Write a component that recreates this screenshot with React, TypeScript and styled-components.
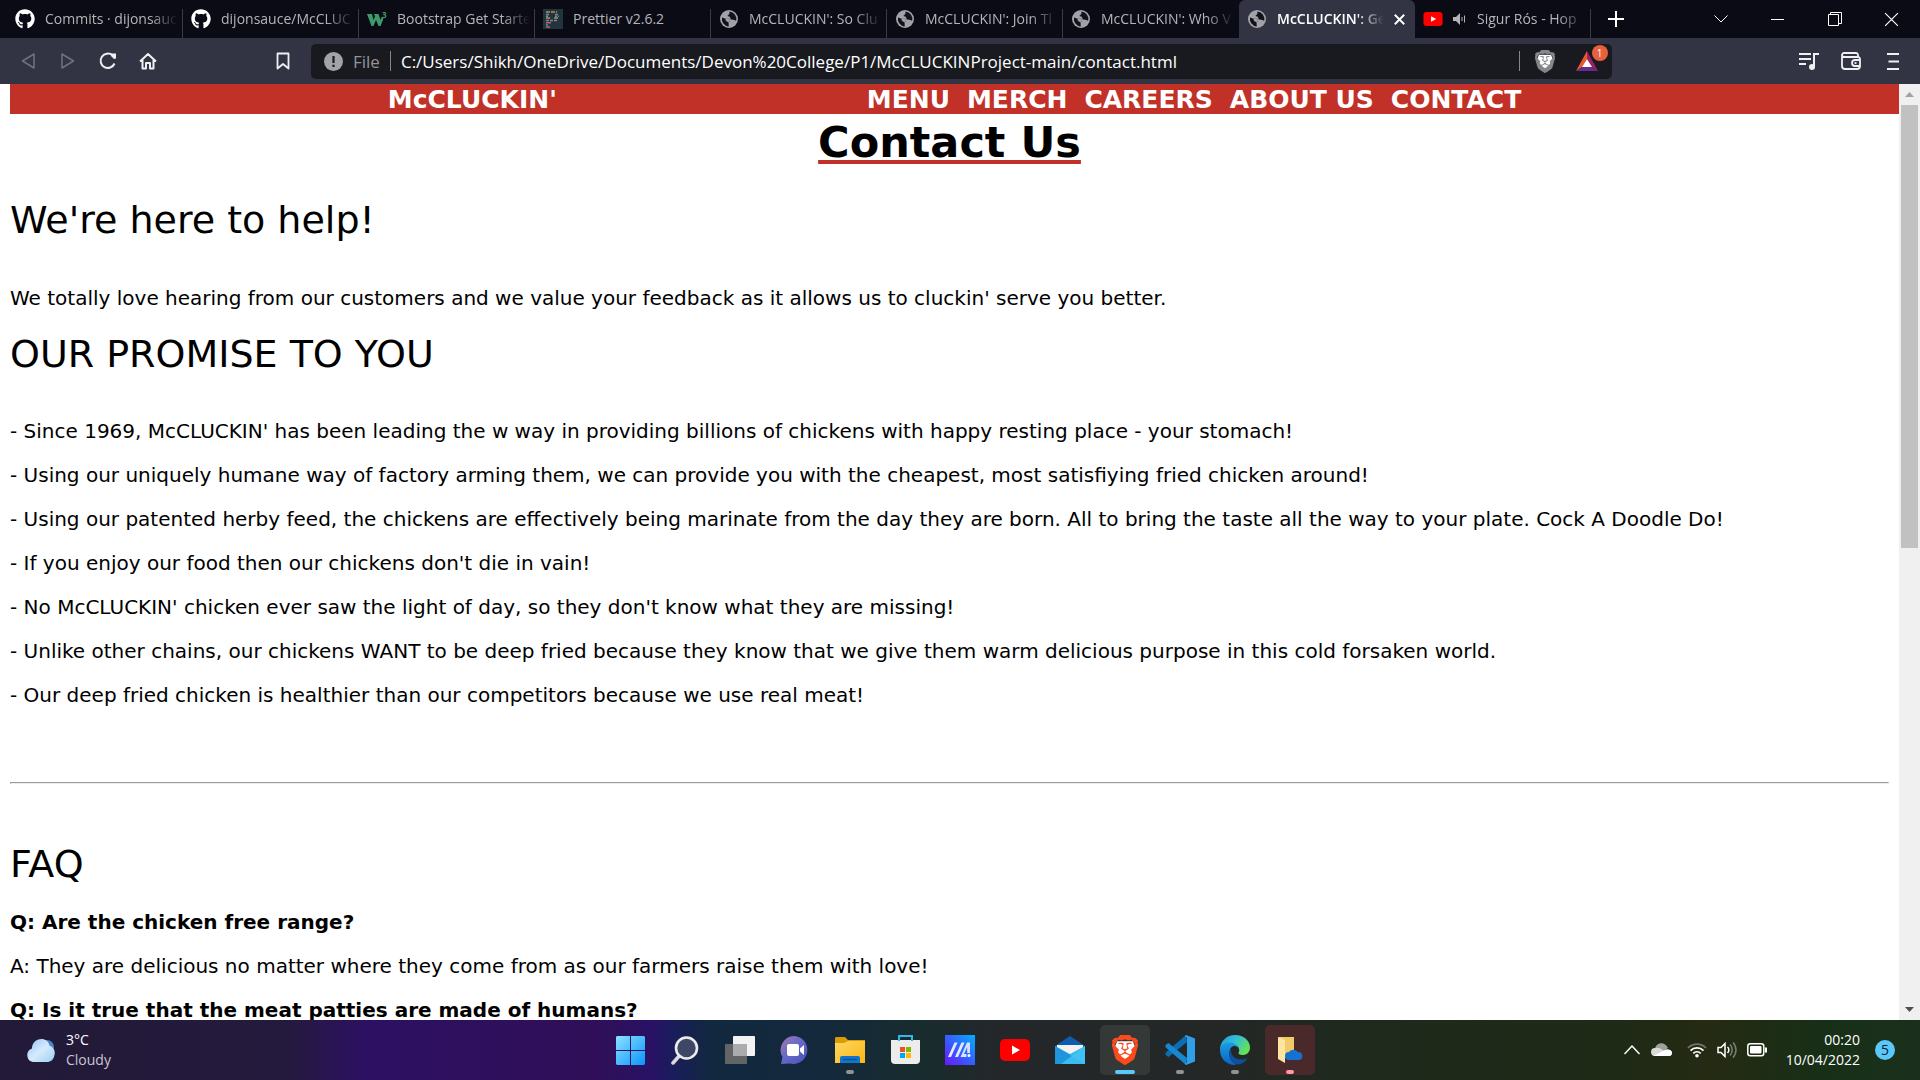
import React from 'react';
import styled, { createGlobalStyle, css } from 'styled-components';
import { FaGithub } from 'react-icons/fa';
import { SiBrave } from 'react-icons/si';

const ui = '"Open Sans", "Noto Sans", sans-serif';
const web = 'Verdana, "DejaVu Sans", sans-serif';
const red = '#c13128';

const Global = createGlobalStyle`
  * { box-sizing: border-box; }
  body { margin: 0; background: #fff; }
  button { border: 0; padding: 0; background: none; color: inherit; font: inherit; }
  svg { display: block; flex: none; }
`;

const Screen = styled.div`
  height: 100vh;
  display: flex;
  flex-direction: column;
  overflow: hidden;
  font-family: ${ui};
`;

/* ---------- tab strip ---------- */
const TabStrip = styled.div`
  flex: none;
  display: flex;
  height: 38px;
  padding-left: 7px;
  background: #0b0b15;
  color: #b5b5b9;
`;
const Tab = styled.div<{ $active?: boolean; $line?: boolean }>`
  flex: 0 1 176px;
  min-width: 0;
  display: flex;
  align-items: center;
  gap: 10px;
  padding: 0 5px 0 8px;
  font-size: 14px;
  line-height: 18px;
  background: linear-gradient(#3b3b40, #3b3b40) right bottom / 1px 29px no-repeat;
  ${p => !p.$line && css`background: none;`}
  ${p => p.$active && css`
    padding-right: 10px;
    background: #323443;
    color: #fff;
    font-weight: 600;
    border-radius: 6px 6px 0 0;
  `}
`;
const TabTitle = styled.span<{ $fade: boolean }>`
  flex: 1;
  min-width: 0;
  overflow: hidden;
  white-space: nowrap;
  ${p => p.$fade && css`mask-image: linear-gradient(to right, #000 calc(100% - 28px), transparent);`}
`;
const StripButton = styled.button<{ $w: number }>`
  width: ${p => p.$w}px;
  height: 38px;
  display: grid;
  place-items: center;
  color: #fff;
`;
const TabClose = styled.button`
  color: #fff;
`;
const Spacer = styled.div<{ $grow: number }>`
  flex: ${p => p.$grow} 1 0;
`;

/* ---------- toolbar ---------- */
const Toolbar = styled.div`
  flex: none;
  display: flex;
  align-items: center;
  height: 46px;
  padding: 0 7px 0 8px;
  background: #323443;
  color: #e6e6ea;
`;
const ToolButton = styled.button<{ $dim?: boolean }>`
  width: 40px;
  height: 40px;
  display: grid;
  place-items: center;
  color: ${p => (p.$dim ? '#70717c' : '#f0f0f2')};
`;
const EndTools = styled.div`
  display: flex;
  gap: 2px;
`;
const AddressBar = styled.div`
  flex: 202 1 0;
  height: 35px;
  margin: 0 0 0 8px;
  padding: 0 8px 0 13px;
  display: flex;
  align-items: center;
  gap: 10px;
  border-radius: 5px;
  background: #191a1f;
  font-size: 17px;
`;
const Scheme = styled.label`
  color: #93949a;
`;
const Rule = styled.span`
  width: 1px;
  height: 20px;
  background: #85868c;
`;
const Address = styled.input`
  flex: 1;
  min-width: 0;
  border: 0;
  padding: 0;
  outline: 0;
  background: none;
  color: #fff;
  font: 17px ${ui};
`;
const Shields = styled.button`
  width: 30px;
  display: grid;
  place-items: center;
`;
const Rewards = styled.button`
  position: relative;
  width: 34px;
  height: 32px;
  display: grid;
  place-items: center;
`;
const Badge = styled.span`
  position: absolute;
  top: 0;
  right: -4px;
  width: 16px;
  height: 16px;
  border-radius: 8px;
  background: #e8603c;
  color: #fff;
  font-size: 10px;
  line-height: 16px;
  text-align: center;
`;

/* ---------- page ---------- */
const Viewport = styled.div`
  flex: 1;
  min-height: 0;
  display: flex;
  background: #fff;
`;
const Page = styled.div`
  flex: 1;
  min-width: 0;
  overflow: hidden;
  padding-left: 10px;
  font-family: ${web};
  font-size: 20px;
  line-height: 24px;
  color: #000;
`;
const Header = styled.header`
  display: flex;
  justify-content: space-between;
  padding: 2px 20% 0;
  background: ${red};
  font-size: 25px;
  line-height: 28px;
  font-weight: 700;
  white-space: nowrap;
`;
const SiteLink = styled.a`
  color: #fff;
  text-decoration: none;
`;
const SiteNav = styled.nav`
  display: flex;
  gap: 17px;
`;
const Content = styled.main`
  margin-right: 10px;
`;
const Title = styled.h1`
  margin: 0;
  text-align: center;
  font-size: 43px;
  line-height: 56px;
  text-decoration: underline ${red} 4px;
  text-underline-offset: 3px;
  text-decoration-skip-ink: none;
`;
const Heading = styled.h2<{ $top: number; $bottom: number }>`
  margin: ${p => p.$top}px 0 ${p => p.$bottom}px;
  font-size: 38px;
  line-height: 48px;
  font-weight: 400;
`;
const Para = styled.p`
  margin: 0 0 20px;
  white-space: nowrap;
`;
const Question = styled(Para)`
  font-weight: 700;
`;
const Divider = styled.hr`
  margin: 75px 0 0;
  border: 1px solid;
  border-color: #9a9a9a #ececec #ececec #9a9a9a;
`;

const Scrollbar = styled.div`
  flex: none;
  width: 21px;
  display: flex;
  flex-direction: column;
  background: #f0f0f0;
`;
const ScrollArrow = styled.button<{ $color: string }>`
  height: 21px;
  display: grid;
  place-items: center;
  color: ${p => p.$color};
`;
const ScrollTrack = styled.div`
  flex: 1;
  padding: 0 2px;
`;
const ScrollThumb = styled.div`
  height: 49.5%;
  background: #c1c1c1;
`;

/* ---------- taskbar ---------- */
const Taskbar = styled.footer`
  flex: none;
  display: grid;
  grid-template-columns: 1fr auto 1fr;
  align-items: center;
  height: 60px;
  background: linear-gradient(90deg, #221a38 0%, #241a3d 15%, #2d1063 19%, #300f58 31%, #281265 34%, #1a1c5c 35%, #12283f 37%, #14293c 43%, #182c2e 48%, #24272a 52%, #242726 64%, #1f291d 70%, #1e2a16 84%, #252a13 89%, #182f17 95%, #1a301c 100%);
  color: #fff;
  font-size: 14px;
  line-height: 20px;
`;
const Weather = styled.button`
  justify-self: start;
  display: flex;
  align-items: center;
  gap: 10px;
  padding-left: 26px;
  text-align: left;
`;
const Lines = styled.span`
  display: flex;
  flex-direction: column;
`;
const Muted = styled.span`
  color: #c9c5d2;
`;
const Apps = styled.div`
  display: flex;
  gap: 5px;
`;
const AppButton = styled.button<{ $bg?: string }>`
  position: relative;
  width: 50px;
  height: 50px;
  display: grid;
  place-items: center;
  border-radius: 5px;
  background: ${p => p.$bg || 'none'};
`;
const Running = styled.span<{ $w: number; $color: string }>`
  position: absolute;
  bottom: 1px;
  left: calc(50% - ${p => p.$w / 2}px);
  width: ${p => p.$w}px;
  height: 4px;
  border-radius: 2px;
  background: ${p => p.$color};
`;
const Tray = styled.div`
  justify-self: end;
  display: flex;
  align-items: center;
  padding-right: 25px;
`;
const TrayGroup = styled.div`
  display: flex;
  margin-right: 5px;
`;
const TrayButton = styled.button`
  width: 30px;
  height: 40px;
  display: grid;
  place-items: center;
`;
const Clock = styled.button`
  display: flex;
  flex-direction: column;
  align-items: flex-end;
  margin: 0 15px 0 14px;
`;
const Count = styled.button`
  width: 20px;
  height: 20px;
  border-radius: 10px;
  background: #5ac8fb;
  color: #10202c;
  font-size: 14px;
  line-height: 20px;
`;

/* ---------- drawings ---------- */
const Globe = () => (
  <svg width="20" height="20" viewBox="0 0 20 20">
    <circle cx="10" cy="10" r="9" fill="#a1a3a9" />
    <g fill="#12121c">
      <path d="M3 8.500l3.500 1.200h3.700l.8 2.300-1.500 1.200.300 4.300a7.600 7.600 0 0 1-6.800-9z" />
      <path d="M10.500 2.500a7.500 7.500 0 0 1 6.600 9.500l-1.600-1-3.700-.600-1-2.600-2.500-.800 2-2z" />
    </g>
    <path d="M6.500 9.700h3.700l.8 2.300-1.500 1.200L7 12zM12.500 10.800l3 .4-1.500 3-2 .8-.800-2z" fill="#a1a3a9" />
  </svg>
);
const W3 = () => (
  <svg width="20" height="20" viewBox="0 0 20 20" fill="#3f9a6b">
    <path d="M0 5h5l1.500 6L8 7.500 7 5h4.500l2 6 1-3 2 1.500L13.500 17h-2L9 11l-2.500 6h-2z" />
    <text x="15" y="9" fontSize="8" fontWeight="700" fontFamily="Open Sans">3</text>
  </svg>
);
const PrettierIcon = () => (
  <svg width="20" height="20" viewBox="0 0 20 20" strokeWidth="1.600" fill="none">
    <path fill="#22353f" d="M0 0h20v20H0z" />
    <path stroke="#b98a58" strokeDasharray="4 1" d="M3 3h11M3 9h4M11 9h4" />
    <path stroke="#8a7f98" strokeDasharray="3 1" d="M3 5.500h3M12 5.500h4M3 11.500h11" />
    <path stroke="#4f9aa4" strokeDasharray="2 1" d="M3 7.300h3M12 7.300h4M3 16h3" />
    <path stroke="#b8606a" d="M3 13.700h5M3 18h4" />
  </svg>
);
const YouTube = ({ w, h }: { w: number; h: number }) => (
  <svg width={w} height={h} viewBox="0 0 30 22">
    <rect width="30" height="22" rx="5" fill="#f00" />
    <path d="M12 6.500v9l8-4.500z" fill="#fff" />
  </svg>
);
const Speaker = () => (
  <svg width="14" height="12" viewBox="0 0 14 12" fill="#b5b5b9" stroke="#b5b5b9">
    <path stroke="none" d="M0 4h3l4-4v12L3 8H0z" />
    <path fill="none" d="M9 4v4M11.500 2.500v7" />
  </svg>
);
const Cross = ({ s, w }: { s: number; w: number }) => (
  <svg width={s} height={s} viewBox="0 0 14 14" stroke="currentColor" strokeWidth={w}>
    <path d="M1 1l12 12M13 1L1 13" />
  </svg>
);
const Stroke = ({ w, h, d, sw = 2 }: { w: number; h: number; d: string; sw?: number }) => (
  <svg width={w} height={h} viewBox={`0 0 ${w} ${h}`} fill="none" stroke="currentColor" strokeWidth={sw} strokeLinejoin="round">
    <path d={d} />
  </svg>
);
const Reload = () => (
  <svg width="18" height="18" viewBox="0 0 18 18" fill="none" stroke="currentColor" strokeWidth="2">
    <path d="M15.500 11.500A7.200 7.200 0 1 1 13.500 3.300" />
    <path d="M12 1.500h5v5l-2 .500-3-3z" fill="currentColor" stroke="none" />
  </svg>
);
const Info = () => (
  <svg width="19" height="19" viewBox="0 0 19 19">
    <circle cx="9.500" cy="9.500" r="9.500" fill="#a1a3a9" />
    <path d="M9.500 4v7M9.500 12.800v2.200" stroke="#191a1f" strokeWidth="2.200" />
  </svg>
);
const ShieldLion = ({ w, h, color }: { w: number; h: number; color: string }) => (
  <svg width={w} height={h} viewBox="2 0 20 24" preserveAspectRatio="none">
    <path fill="#fff" d="M6 5h12l2 5-3 8-5 3-5-3-3-8z" />
    <SiBrave size={24} color={color} />
  </svg>
);
const Bat = () => (
  <svg width="22" height="20" viewBox="0 0 22 20">
    <path d="M11 0L0 20l6-4 5-8z" fill="#f0562b" />
    <path d="M11 0l11 20-6-4-5-8z" fill="#9e1f63" />
    <path d="M0 20h22l-6-4H6z" fill="#662d91" />
    <path d="M11 8l-5 8h10z" fill="#fff" />
  </svg>
);
const Playlist = () => (
  <svg width="20" height="19" viewBox="0 0 20 19" fill="none" stroke="currentColor" strokeWidth="2">
    <path d="M0 2h12M0 7h12M0 12h7M15 15V2h5" />
    <ellipse cx="13" cy="15" rx="3" ry="3" fill="currentColor" stroke="none" />
  </svg>
);
const Wallet = () => (
  <svg width="20" height="18" viewBox="0 0 20 18" fill="none" stroke="currentColor" strokeWidth="1.800">
    <path d="M17 4V3a2 2 0 0 0-2-2H3a2 2 0 0 0-2 2v11a3 3 0 0 0 3 3h12a3 3 0 0 0 3-3V7a2 2 0 0 0-2-2H3a2 2 0 0 1-2-2" />
    <path d="M19 8h-5a3 3 0 0 0 0 6h5" />
    <path d="M13.500 11h2" />
  </svg>
);
const Cloud = () => (
  <svg width="30" height="23" viewBox="0 0 30 23">
    <defs>
      <linearGradient id="cl" x1="0" y1="0" x2="1" y2="1">
        <stop offset="0" stopColor="#8fc2f4" /><stop offset=".5" stopColor="#d5eafd" /><stop offset="1" stopColor="#9fcdf3" />
      </linearGradient>
    </defs>
    <circle cx="21" cy="8" r="7" fill="#4c86c6" />
    <path d="M7 23a7 7 0 0 1-1-13.500C6 4 10 0 15.500 0c4 0 7 2.500 8 6.500a8 8 0 0 1 5 9.500c-1 5-4 7-7.500 7z" fill="url(#cl)" />
  </svg>
);
const Windows = () => (
  <svg width="29" height="29" viewBox="0 0 29 29">
    <defs>
      <linearGradient id="wn" x1="0" y1="0" x2="1" y2="1">
        <stop offset="0" stopColor="#8be2ff" /><stop offset="1" stopColor="#0a94fb" />
      </linearGradient>
    </defs>
    <path fill="url(#wn)" d="M1 0h13v14H0V1zM15 0h13l1 1v13H15zM0 15h14v14H1l-1-1zM15 15h14v13l-1 1H15z" />
  </svg>
);
const Search = () => (
  <svg width="28" height="29" viewBox="0 0 28 29">
    <path d="M9 19l-7 8" stroke="#d9d9dc" strokeWidth="3.500" strokeLinecap="round" />
    <circle cx="15.500" cy="12" r="10.500" fill="#3f4766" stroke="#ececee" strokeWidth="2.600" />
  </svg>
);
const TaskView = () => (
  <svg width="30" height="28" viewBox="0 0 30 28">
    <rect y="8" width="22" height="20" rx="1" fill="#626466" />
    <rect x="8" width="22" height="20" rx="1" fill="#f2f2f2" />
    <path d="M8 8h14v12H8z" fill="#aaabac" />
  </svg>
);
const Chat = () => (
  <svg width="30" height="29" viewBox="0 0 30 29">
    <defs>
      <linearGradient id="ch" x1="0" y1="0" x2="1" y2="1">
        <stop offset="0" stopColor="#a27ab0" /><stop offset=".5" stopColor="#6367c8" /><stop offset="1" stopColor="#4b50b8" />
      </linearGradient>
    </defs>
    <path d="M15 0a14 14 0 1 1-5 27.500L1 28l1.500-7A14 14 0 0 1 15 0z" fill="url(#ch)" />
    <rect x="7" y="8" width="12" height="12" rx="2" fill="#fff" />
    <path d="M20 12.500l4-3.500v10l-4-3.500z" fill="#fff" />
  </svg>
);
const Explorer = () => (
  <svg width="30" height="27" viewBox="0 0 30 27">
    <defs>
      <linearGradient id="ex" x1="0" y1="0" x2="1" y2="1">
        <stop offset="0" stopColor="#ffd766" /><stop offset="1" stopColor="#f9b80f" />
      </linearGradient>
    </defs>
    <path d="M1 0h9l3 3h17v10H0V1z" fill="#dc9a05" />
    <path d="M0 6h9l4-2h17v22H0z" fill="url(#ex)" />
    <path d="M5 26v-5q0-2 2-2h16q2 0 2 2v5z" fill="#0f76c9" />
    <path d="M8 22.500h14" stroke="#084f93" strokeWidth="1.300" />
  </svg>
);
const Store = () => (
  <svg width="29" height="30" viewBox="0 0 29 30">
    <path d="M0 5h29v20a4 4 0 0 1-4 4H4a4 4 0 0 1-4-4z" fill="#ececec" />
    <path d="M8 6V1h13v5" fill="none" stroke="#2fb9e8" strokeWidth="2" />
    <path d="M9 12h5v5H9z" fill="#f25022" /><path d="M15 12h5v5h-5z" fill="#7fba00" />
    <path d="M9 18h5v5H9z" fill="#00a4ef" /><path d="M15 18h5v5h-5z" fill="#ffb900" />
  </svg>
);
const MyAsus = () => (
  <svg width="30" height="30" viewBox="0 0 30 30">
    <defs>
      <linearGradient id="ma" x1="0" y1="1" x2="1" y2="0">
        <stop offset="0" stopColor="#6a15ff" /><stop offset=".5" stopColor="#3560ff" /><stop offset="1" stopColor="#00b0ff" />
      </linearGradient>
    </defs>
    <path fill="url(#ma)" d="M0 0h30v30H0z" />
    <path d="M3 22L9.500 7.500h3L6 22zM10 22l6.500-14.500h3L13 22z" fill="#e3ecff" />
    <path d="M15.500 22L22 7.500h3V18h-2.800v-6l-3.200 7h2.500v3z" fill="#d5e2ff" />
    <circle cx="24" cy="20.500" r="1.500" fill="#fff" />
  </svg>
);
const Mail = () => (
  <svg width="30" height="28" viewBox="0 0 30 28">
    <path d="M0 10L15 0l15 10v4H0z" fill="#0e5cae" />
    <path d="M2 9h26v8L15 19 2 17z" fill="#f2f2f2" />
    <path d="M0 10l15 8 15-8v18H0z" fill="#36b9ee" />
    <path d="M0 10l30 18H0z" fill="#1f95de" />
    <path d="M30 10L6 28h24z" fill="#42c6f3" opacity=".8" />
  </svg>
);
const VsCode = () => (
  <svg width="30" height="30" viewBox="0 0 30 30">
    <path d="M22 7L3.500 22 0.500 20v-2.200L21 0z" fill="#0a6db5" />
    <path d="M22 23L3.500 8 0.500 10v2.200L21 30z" fill="#1787d1" />
    <path d="M21 0l9 3.500v23L21 30l-1-1 2-2V3l-2-2z" fill="#2f9fe8" />
  </svg>
);
const Edge = () => (
  <svg width="30" height="30" viewBox="0 0 30 30">
    <defs>
      <linearGradient id="e1" x1="0" y1="0" x2="1" y2=".5">
        <stop offset="0" stopColor="#1b9de0" /><stop offset=".55" stopColor="#35c1d1" /><stop offset="1" stopColor="#66e05a" />
      </linearGradient>
      <linearGradient id="e2" x1="0" y1="0" x2="0" y2="1">
        <stop offset="0" stopColor="#1c9ce6" /><stop offset="1" stopColor="#0a64bd" />
      </linearGradient>
    </defs>
    <path d="M0 15C0 6 7 0 15 0c9 0 15 6 15 12.500 0 5-3.500 7.500-7.500 7.500-3 0-4.500-1.200-4-2.200 2-3.300 0-7.800-4.500-7.800C6 10 0 15 0 15z" fill="url(#e1)" />
    <path d="M0 15C0 9.500 5 7.500 9.500 7.500c5 0 9 3 9.500 7-1-3-3.500-4-5.500-3.500C8 13 7 23 16 29.900 7 30.500 0 24 0 15z" fill="url(#e2)" />
    <path d="M11 14c-4 6-1 15 7.500 15.500 4-.800 7-3 9-6.500-8 4-17.500 0-16.500-9z" fill="#0f4fa0" />
  </svg>
);
const FolderCloud = () => (
  <svg width="26" height="28" viewBox="0 0 26 28">
    <path d="M2 1h15v21H5z" fill="#f0cb67" />
    <path d="M1 1l7 3v23l-7-4z" fill="#ffe6a0" />
    <path d="M12 24a4 4 0 0 1 0-8c2-3 7-3 8.500 0a4 4 0 0 1 1.500 8z" fill="#1672cf" />
  </svg>
);
const OneDrive = () => (
  <svg width="21" height="14" viewBox="0 0 21 14">
    <path d="M4 6c1-7 10-8 13-1l-8 5z" fill="#9da39a" />
    <path d="M4 13a4 4 0 0 1 0-8c3-1 7 1 9 3 4-3 8-1 8 2 0 2-1.500 3-3 3z" fill="#d8dad6" />
    <path d="M2 13l10-5c4-3 9-1 9 2 0 2-1.500 3-3 3z" fill="#fff" />
  </svg>
);
const Wifi = () => (
  <svg width="20" height="16" viewBox="0 0 20 16" fill="none" stroke="#fff" strokeWidth="1.800">
    <path d="M1 6a12.500 12.500 0 0 1 18 0" opacity=".35" />
    <path d="M3.500 8.700a9 9 0 0 1 13 0M6.300 11.400a5.300 5.300 0 0 1 7.400 0" />
    <circle cx="10" cy="13.800" r="1.800" fill="#fff" stroke="none" />
  </svg>
);
const Volume = () => (
  <svg width="20" height="16" viewBox="0 0 20 16" fill="none" stroke="#fff" strokeWidth="1.500">
    <path d="M1 5.500h3l4-4v13l-4-4H1z" />
    <path d="M10.500 5a4 4 0 0 1 0 6" />
    <path d="M13 2.500a8 8 0 0 1 0 11M16 .500a11 11 0 0 1 0 15" opacity=".4" />
  </svg>
);
const Battery = () => (
  <svg width="20" height="14" viewBox="0 0 20 14">
    <rect x=".8" y=".8" width="16" height="12" rx="2.500" fill="none" stroke="#fff" strokeWidth="1.500" />
    <rect x="3" y="3" width="11.500" height="7.500" rx="1" fill="#fff" />
    <path d="M18 4.500h2v5h-2z" fill="#fff" />
  </svg>
);

const globe = <Globe />;
const github = <FaGithub size={20} color="#fff" />;

const tabs: { title: string; icon: React.ReactNode; active?: boolean; line?: boolean; sound?: boolean; short?: boolean }[] = [
  { title: 'Commits · dijonsauc', icon: github, line: true },
  { title: 'dijonsauce/McCLUC', icon: github, line: true },
  { title: 'Bootstrap Get Starte', icon: <W3 />, line: true },
  { title: 'Prettier v2.6.2', icon: <PrettierIcon />, line: true, short: true },
  { title: "McCLUCKIN': So Clu", icon: globe, line: true },
  { title: "McCLUCKIN': Join Tl", icon: globe, line: true },
  { title: "McCLUCKIN': Who V", icon: globe },
  { title: "McCLUCKIN': Ge", icon: globe, active: true },
  { title: 'Sigur Rós - Hop', icon: <YouTube w={20} h={14} />, line: true, sound: true },
];

const promises = [
  "- Since 1969, McCLUCKIN' has been leading the w way in providing billions of chickens with happy resting place - your stomach!",
  '- Using our uniquely humane way of factory arming them, we can provide you with the cheapest, most satisfiying fried chicken around!',
  '- Using our patented herby feed, the chickens are effectively being marinate from the day they are born. All to bring the taste all the way to your plate. Cock A Doodle Do!',
  "- If you enjoy our food then our chickens don't die in vain!",
  "- No McCLUCKIN' chicken ever saw the light of day, so they don't know what they are missing!",
  '- Unlike other chains, our chickens WANT to be deep fried because they know that we give them warm delicious purpose in this cold forsaken world.',
  '- Our deep fried chicken is healthier than our competitors because we use real meat!',
];

const grey = '#8f9492';
const apps: { name: string; icon: React.ReactNode; bg?: string; bar?: [number, string] }[] = [
  { name: 'Start', icon: <Windows /> },
  { name: 'Search', icon: <Search /> },
  { name: 'Task view', icon: <TaskView /> },
  { name: 'Chat', icon: <Chat /> },
  { name: 'File Explorer', icon: <Explorer />, bar: [8, grey] },
  { name: 'Store', icon: <Store /> },
  { name: 'MyASUS', icon: <MyAsus /> },
  { name: 'YouTube', icon: <YouTube w={30} h={22} /> },
  { name: 'Mail', icon: <Mail /> },
  { name: 'Brave', icon: <ShieldLion w={26} h={30} color="#fb4a1c" />, bg: '#343836', bar: [20, '#5ac8fb'] },
  { name: 'Visual Studio Code', icon: <VsCode />, bar: [8, grey] },
  { name: 'Edge', icon: <Edge />, bar: [8, grey] },
  { name: 'Documents', icon: <FolderCloud />, bg: '#4a292b', bar: [8, '#ff99a4'] },
];

export default function App() {
  return (
    <Screen>
      <Global />
      <TabStrip>
        {tabs.map(t => (
          <Tab key={t.title} $active={t.active} $line={t.line}>
            {t.icon}
            {t.sound && <Speaker />}
            <TabTitle $fade={!t.short}>{t.title}</TabTitle>
            {t.active && <TabClose aria-label="Close tab"><Cross s={11} w={2.4} /></TabClose>}
          </Tab>
        ))}
        <StripButton $w={50} aria-label="New tab"><Stroke w={16} h={16} d="M8 0v16M0 8h16" /></StripButton>
        <Spacer $grow={1} />
        <StripButton $w={57} aria-label="Search tabs"><Stroke w={14} h={8} sw={1} d="M0.500 0.500l6.500 6.500 6.500-6.500" /></StripButton>
        <StripButton $w={57} aria-label="Minimise"><Stroke w={13} h={3} sw={1} d="M0 1.500h13" /></StripButton>
        <StripButton $w={57} aria-label="Restore"><Stroke w={14} h={14} sw={1} d="M0.500 2.500h10v11h-10zM2.500 2.500v-2h11v11h-3" /></StripButton>
        <StripButton $w={57} aria-label="Close"><Cross s={15} w={1.1} /></StripButton>
      </TabStrip>

      <Toolbar>
        <ToolButton $dim aria-label="Back"><Stroke w={14} h={18} sw={1.5} d="M13 2v14L1.500 9z" /></ToolButton>
        <ToolButton $dim aria-label="Forward"><Stroke w={14} h={18} sw={1.5} d="M1 2v14L12.500 9z" /></ToolButton>
        <ToolButton aria-label="Reload"><Reload /></ToolButton>
        <ToolButton aria-label="Home"><Stroke w={18} h={18} d="M1 9.500L9 2l8 7.500M3.500 8v8.500H7V11h4v5.500h3.500V8" /></ToolButton>
        <Spacer $grow={15} />
        <ToolButton aria-label="Bookmark"><Stroke w={14} h={18} sw={1.8} d="M1.500 1.500h11v15L7 12l-5.500 4.500z" /></ToolButton>
        <AddressBar>
          <Info />
          <Scheme htmlFor="address">File</Scheme>
          <Rule />
          <Address id="address" defaultValue="C:/Users/Shikh/OneDrive/Documents/Devon%20College/P1/McCLUCKINProject-main/contact.html" />
          <Rule />
          <Shields aria-label="Shields"><ShieldLion w={20} h={23} color="#85868b" /></Shields>
          <Rewards aria-label="Rewards"><Bat /><Badge>1</Badge></Rewards>
        </AddressBar>
        <Spacer $grow={28} />
        <EndTools>
          <ToolButton aria-label="Media"><Playlist /></ToolButton>
          <ToolButton aria-label="Wallet"><Wallet /></ToolButton>
          <ToolButton aria-label="Menu"><Stroke w={12} h={17} d="M0 1h12M1.500 8.500h10.500M0 16h12" /></ToolButton>
        </EndTools>
      </Toolbar>

      <Viewport>
        <Page>
          <Header>
            <SiteLink href="#home">McCLUCKIN'</SiteLink>
            <SiteNav>
              {['MENU', 'MERCH', 'CAREERS', 'ABOUT US', 'CONTACT'].map(n => (
                <SiteLink key={n} href={'#' + n.toLowerCase().replace(' ', '-')}>{n}</SiteLink>
              ))}
            </SiteNav>
          </Header>
          <Content>
            <Title>Contact Us</Title>
            <Heading $top={26} $bottom={42}>We're here to help!</Heading>
            <Para>We totally love hearing from our customers and we value your feedback as it allows us to cluckin' serve you better.</Para>
            <Heading $top={20} $bottom={41}>OUR PROMISE TO YOU</Heading>
            {promises.map(p => <Para key={p}>{p}</Para>)}
            <Divider />
            <Heading $top={56} $bottom={22}>FAQ</Heading>
            <Question>Q: Are the chicken free range?</Question>
            <Para>A: They are delicious no matter where they come from as our farmers raise them with love!</Para>
            <Question>Q: Is it true that the meat patties are made of humans?</Question>
          </Content>
        </Page>
        <Scrollbar>
          <ScrollArrow $color="#a3a3a3" aria-label="Scroll up"><svg width="9" height="5"><path d="M0 5L4.500 0 9 5z" fill="currentColor" /></svg></ScrollArrow>
          <ScrollTrack><ScrollThumb /></ScrollTrack>
          <ScrollArrow $color="#505050" aria-label="Scroll down"><svg width="9" height="5"><path d="M0 0l4.500 5L9 0z" fill="currentColor" /></svg></ScrollArrow>
        </Scrollbar>
      </Viewport>

      <Taskbar>
        <Weather>
          <Cloud />
          <Lines><span>3°C</span><Muted>Cloudy</Muted></Lines>
        </Weather>
        <Apps>
          {apps.map(a => (
            <AppButton key={a.name} $bg={a.bg} aria-label={a.name}>
              {a.icon}
              {a.bar && <Running $w={a.bar[0]} $color={a.bar[1]} />}
            </AppButton>
          ))}
        </Apps>
        <Tray>
          <TrayGroup>
            <TrayButton aria-label="Hidden icons"><Stroke w={16} h={10} sw={1.5} d="M0.500 9L8 1l7.500 8" /></TrayButton>
            <TrayButton aria-label="OneDrive"><OneDrive /></TrayButton>
          </TrayGroup>
          <TrayButton aria-label="Network"><Wifi /></TrayButton>
          <TrayButton aria-label="Volume"><Volume /></TrayButton>
          <TrayButton aria-label="Battery"><Battery /></TrayButton>
          <Clock><span>00:20</span><span>10/04/2022</span></Clock>
          <Count>5</Count>
        </Tray>
      </Taskbar>
    </Screen>
  );
}
